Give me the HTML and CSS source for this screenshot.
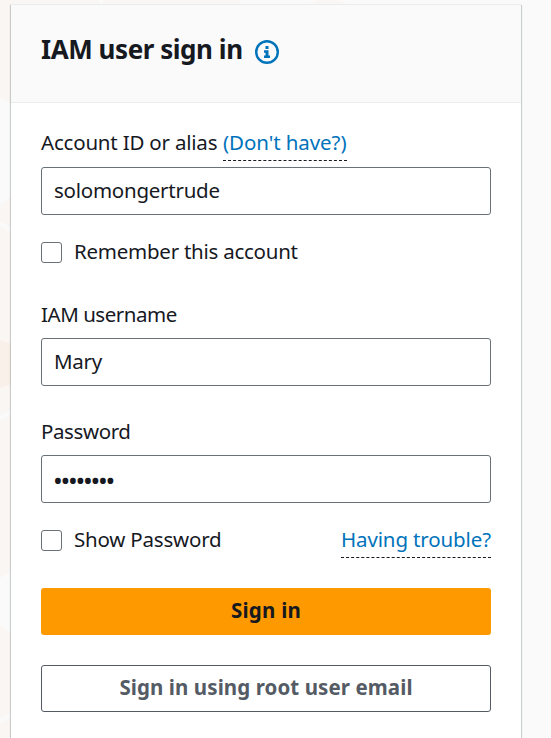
FILE: index.html
```
<!DOCTYPE html>
<html lang="en">
<head>
<meta charset="utf-8">
<title>IAM user sign in</title>
<link rel="stylesheet" href="styles.css">
</head>
<body>
<svg class="backdrop" width="551" height="738" viewBox="0 0 551 738" aria-hidden="true">
  <path class="hex" d="M0 0H240V6H12V104L0 98Z"/>
  <path class="hex" d="M306 5Q327 -6 350 5Z"/>
  <path class="hex" d="M0 205L12 196V570L0 578Z"/>
  <path class="hex deep" d="M0 340L12 344V384L0 388Z"/>
  <path class="hex" d="M0 625L12 634V738H0Z"/>
  <path class="edge" d="M0 223L12 231M0 418L12 412M0 722L12 714M101 0V5"/>
</svg>
<main class="card">
  <header class="card-header">
    <h1>IAM user sign in</h1>
    <svg class="info" width="24" height="24" viewBox="0 0 24 24" aria-hidden="true">
      <circle cx="12" cy="12" r="10.8"/>
      <path d="M10.5 6h3v3h-3zM9 10.2h4.5v5.2H15V18H9v-2.6h1.5v-2.6H9z"/>
    </svg>
  </header>
  <form class="card-body">
    <div class="label account"><span class="t-account">Account ID or alias</span><a class="hint dont-have">(Don't have?)</a></div>
    <div class="input"><span class="t-id">solomongertrude</span></div>
    <div class="row remember"><span class="box"></span><span class="t-remember">Remember this account</span></div>
    <div class="label user"><span class="t-user">IAM username</span></div>
    <div class="input"><span class="t-mary">Mary</span></div>
    <div class="label pass"><span class="t-pass">Password</span></div>
    <div class="input secret"><span class="dots">••••••••</span></div>
    <div class="row show"><span class="box"></span><span class="t-show">Show Password</span><a class="hint trouble">Having trouble?</a></div>
    <div class="button primary"><span class="t-sign">Sign in</span></div>
    <div class="button secondary"><span class="t-root">Sign in using root user email</span></div>
  </form>
</main>
</body>
</html>
```

FILE: styles.css
```
* { box-sizing: border-box; }
body {
  margin: 0;
  height: 738px;
  overflow: hidden;
  background: #fafafa;
  color: #16191f;
  font: 20.5px/26px "Noto Sans", "Open Sans", sans-serif;
  white-space: nowrap;
}
.backdrop { position: absolute; left: 0; top: 0; z-index: -1; }
.hex { fill: #faf6f3; }
.deep { fill: #faf0ea; }
.edge { stroke: #fafafa; stroke-width: 4; fill: none; }
.card {
  width: 510px;
  height: 760px;
  margin: 4px 0 0 11px;
  background: #fff;
  border-top: 1px solid #eaeded;
  box-shadow: 0 1px 1px 0 rgba(0,28,36,.3), 1px 1px 1px 0 rgba(0,28,36,.15), -1px 1px 1px 0 rgba(0,28,36,.15);
}
.card-header {
  display: flex;
  height: 98px;
  padding: 30px 30px 0;
  background: #fafafa;
  border-bottom: 1px solid #eaeded;
}
h1 { width: 214px; margin: 0; font-size: 26px; line-height: 28px; font-weight: 700; letter-spacing: -.45px; }
.info { margin-top: 5px; }
.info circle { fill: none; stroke: #0073bb; stroke-width: 2.4; }
.info path { fill: #0073bb; }
.card-body { padding: 26px 30px 0; }
.label { display: flex; height: 28px; }
.account { height: 32px; margin-bottom: 6px; }
.account > span { width: 182px; }
.hint { color: #0073bb; height: 32px; border-bottom: 1px dashed #16191f; }
.dont-have { width: 124px; letter-spacing: -.08px; }
.input {
  display: flex;
  align-items: center;
  height: 48px;
  padding: 0 12px 2px;
  border: 1px solid #687078;
  border-radius: 3px;
}
.row { display: flex; height: 28px; }
.remember { margin-top: 23px; }
.box { width: 21px; height: 21px; margin: 4px 12px 0 0; border: 1px solid #687078; border-radius: 3px; }
.user { margin: 35px 0 9px; }
.pass { margin: 32px 0 9px; }
.show { margin-top: 23px; }
.trouble { width: 150px; margin-left: auto; letter-spacing: -.13px; }
.button { display: flex; justify-content: center; height: 47px; padding-top: 9px; border-radius: 3px; font-weight: 700; }
.primary { margin-top: 34px; background: #ff9900; }
.secondary { margin-top: 30px; padding-top: 8px; border: 1px solid #545b64; color: #545b64; }
.t-account { letter-spacing: -.2px; }
.t-id { letter-spacing: -.25px; }
.t-remember { letter-spacing: -.25px; }
.t-user { letter-spacing: -.46px; }
.t-mary { letter-spacing: -.3px; }
.t-pass { letter-spacing: -.4px; }
.t-show { letter-spacing: -.2px; }
.t-sign { letter-spacing: .25px; }
.t-root { letter-spacing: .08px; }
.secret { padding-top: 2px; padding-bottom: 0; padding-left: 11px; }
.dots { font-size: 26px; letter-spacing: -2.27px; }
```
